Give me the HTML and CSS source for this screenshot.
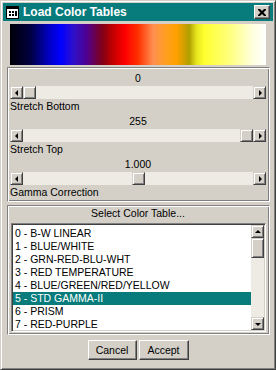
FILE: index.html
```html
<!DOCTYPE html>
<html lang="en">
<head>
    <meta charset="UTF-8">
    <title>Load Color Tables</title>
    <link rel="stylesheet" href="styles.css">
</head>
<body>
    <div class="window">
        <div class="titlebar">
            <svg class="app-icon" width="13" height="13" viewBox="0 0 13 13">
                <rect x="0.5" y="0.5" width="12" height="12" fill="#fff" stroke="#000"/>
                <rect x="1" y="1" width="11" height="2" fill="#000"/>
                <rect x="3" y="5" width="2" height="2" fill="#000"/>
                <rect x="6" y="5" width="2" height="2" fill="#000"/>
                <rect x="3" y="8" width="2" height="2" fill="#000"/>
                <rect x="6" y="8" width="2" height="2" fill="#000"/>
                <rect x="9" y="5" width="2" height="5" fill="#000"/>
            </svg>
            <span class="title">Load Color Tables</span>
            <div class="close-btn">
                <svg width="8" height="7" viewBox="0 0 8 7">
                    <path d="M0 0h2l2 2 2-2h2v1L5.5 3.5 8 6v1H6L4 5 2 7H0V6l2.5-2.5L0 1z" fill="#000"/>
                </svg>
            </div>
        </div>

        <div class="colorbar"></div>

        <div class="group sliders">
            <div class="slider-block">
                <div class="value">0</div>
                <div class="hscroll">
                    <div class="btn3d arrow left"></div>
                    <div class="track"><div class="btn3d thumb" style="margin-left: 0px;"></div></div>
                    <div class="btn3d arrow right"></div>
                </div>
                <div class="label">Stretch Bottom</div>
            </div>
            <div class="slider-block">
                <div class="value">255</div>
                <div class="hscroll">
                    <div class="btn3d arrow left"></div>
                    <div class="track"><div class="btn3d thumb" style="margin-left: 217px;"></div></div>
                    <div class="btn3d arrow right"></div>
                </div>
                <div class="label">Stretch Top</div>
            </div>
            <div class="slider-block">
                <div class="value">1.000</div>
                <div class="hscroll">
                    <div class="btn3d arrow left"></div>
                    <div class="track"><div class="btn3d thumb" style="margin-left: 109px;"></div></div>
                    <div class="btn3d arrow right"></div>
                </div>
                <div class="label">Gamma Correction</div>
            </div>
        </div>

        <div class="group tables">
            <div class="caption">Select Color Table...</div>
            <div class="listbox">
                <ul class="items">
                    <li>0 - B-W LINEAR</li>
                    <li>1 - BLUE/WHITE</li>
                    <li>2 - GRN-RED-BLU-WHT</li>
                    <li>3 - RED TEMPERATURE</li>
                    <li>4 - BLUE/GREEN/RED/YELLOW</li>
                    <li class="selected">5 - STD GAMMA-II</li>
                    <li>6 - PRISM</li>
                    <li>7 - RED-PURPLE</li>
                </ul>
                <div class="vscroll">
                    <div class="btn3d arrow up"></div>
                    <div class="btn3d vthumb"></div>
                    <div class="vtrack"></div>
                    <div class="btn3d arrow down"></div>
                </div>
            </div>
        </div>

        <div class="buttons">
            <button class="btn3d push cancel">Cancel</button>
            <button class="btn3d push accept">Accept</button>
        </div>
    </div>
</body>
</html>
```

FILE: styles.css
```css
* {
    box-sizing: border-box;
}

body {
    margin: 0;
    font-family: 'Liberation Sans', Arial, sans-serif;
    font-size: 10.5px;
    color: #000;
    background: #d4d0c8;
}

.window {
    width: 276px;
    height: 370px;
    background: #d4d0c8;
    border: 1px solid;
    border-color: #d4d0c8 #404040 #404040 #d4d0c8;
    box-shadow: inset 1px 1px #fff, inset -1px -1px #808080;
    padding: 2px;
    display: flex;
    flex-direction: column;
}

/* title bar */
.titlebar {
    height: 18px;
    background: #087c7c;
    display: flex;
    align-items: center;
    padding-left: 3px;
}

.app-icon {
    display: block;
}

.title {
    color: #fff;
    font-weight: bold;
    font-size: 12px;
    margin-left: 4px;
}

.close-btn {
    margin-left: auto;
    margin-right: 3px;
    width: 16px;
    height: 14px;
    background: #d4d0c8;
    border: 1px solid;
    border-color: #fff #404040 #404040 #fff;
    box-shadow: inset -1px -1px #808080;
    display: flex;
    align-items: center;
    justify-content: center;
}

.close-btn svg {
    display: block;
}

/* colour strip */
.colorbar {
    height: 41px;
    margin: 3px 7px 0 7px;
    background: linear-gradient(to right,
        #000008 0%,
        #000040 8%,
        #0000c0 15%,
        #0000ff 20%,
        #3010c8 25%,
        #500090 30%,
        #800018 36%,
        #c00000 40%,
        #ff0000 45%,
        #ff3000 50%,
        #ff9050 56%,
        #ffa020 61%,
        #ffa000 65%,
        #b0a000 70%,
        #e8e820 73%,
        #ffff30 76%,
        #ffff80 86%,
        #ffffe0 95%,
        #ffffff 100%);
}

/* etched group boxes */
.group {
    margin: 2px 3px 0 4px;
    border: 1px solid;
    border-color: #808080 #fff #fff #808080;
    box-shadow: inset 1px 1px #fff, inset -1px -1px #808080;
    padding: 1px 3px 1px 2px;
}

.sliders {
    padding-top: 4px;
    height: 135px;
}

.slider-block {
    display: flex;
    flex-direction: column;
    gap: 1px;
    margin-bottom: 2px;
}

.value {
    text-align: center;
    height: 13px;
    line-height: 13px;
}

.label {
    height: 13px;
    line-height: 13px;
}

/* 3d buttons */
.btn3d {
    background: #d4d0c8;
    border: 1px solid;
    border-color: #d4d0c8 #404040 #404040 #d4d0c8;
    box-shadow: inset 1px 1px #fff, inset -1px -1px #808080;
}

.hscroll {
    display: flex;
    height: 13px;
}

.arrow {
    width: 13px;
    height: 13px;
    flex: none;
    display: flex;
    align-items: center;
    justify-content: center;
}

.arrow::before {
    content: "";
    width: 0;
    height: 0;
}

.arrow.left::before {
    border-right: 3px solid #000;
    border-top: 3px solid transparent;
    border-bottom: 3px solid transparent;
}

.arrow.right::before {
    border-left: 3px solid #000;
    border-top: 3px solid transparent;
    border-bottom: 3px solid transparent;
    margin-left: 1px;
}

.arrow.up::before {
    border-bottom: 3px solid #000;
    border-left: 3px solid transparent;
    border-right: 3px solid transparent;
}

.arrow.down::before {
    border-top: 3px solid #000;
    border-left: 3px solid transparent;
    border-right: 3px solid transparent;
    margin-top: 1px;
}

.track {
    flex: 1;
    background: #eeebe5;
    display: flex;
}

.thumb {
    width: 13px;
    height: 13px;
}

/* list of tables */
.tables {
    margin-top: 3px;
    padding-top: 1px;
    padding-bottom: 2px;
}

.caption {
    text-align: center;
    height: 13px;
    line-height: 13px;
    margin-bottom: 3px;
}

.listbox {
    margin-left: 1px;
    display: flex;
    height: 109px;
    background: #fff;
    border: 1px solid;
    border-color: #808080 #fff #fff #808080;
    box-shadow: inset 1px 1px #404040, inset -1px -1px #d4d0c8;
    padding: 2px 1px 1px 1px;
}

.items {
    list-style: none;
    margin: 0;
    padding: 1px 0 0 0;
    flex: 1;
    font-size: 10.5px;
}

.items li {
    height: 13px;
    line-height: 13px;
    padding-left: 2px;
    white-space: nowrap;
}

.items li.selected {
    background: #087c7c;
    color: #fff;
}

.vscroll {
    width: 13px;
    display: flex;
    flex-direction: column;
    margin-top: -1px;
}

.vthumb {
    height: 20px;
    flex: none;
}

.vtrack {
    flex: 1;
    background: #eeebe5;
}

/* bottom buttons */
.buttons {
    display: flex;
    justify-content: center;
    gap: 2px;
    margin-top: 5px;
}

.push {
    height: 20px;
    font-family: 'Liberation Sans', Arial, sans-serif;
    font-size: 10.5px;
    color: #000;
    padding: 0;
    border-color: #fff #404040 #404040 #fff;
    box-shadow: inset -1px -1px #808080;
}

.cancel {
    width: 49px;
}

.accept {
    width: 50px;
}
```
